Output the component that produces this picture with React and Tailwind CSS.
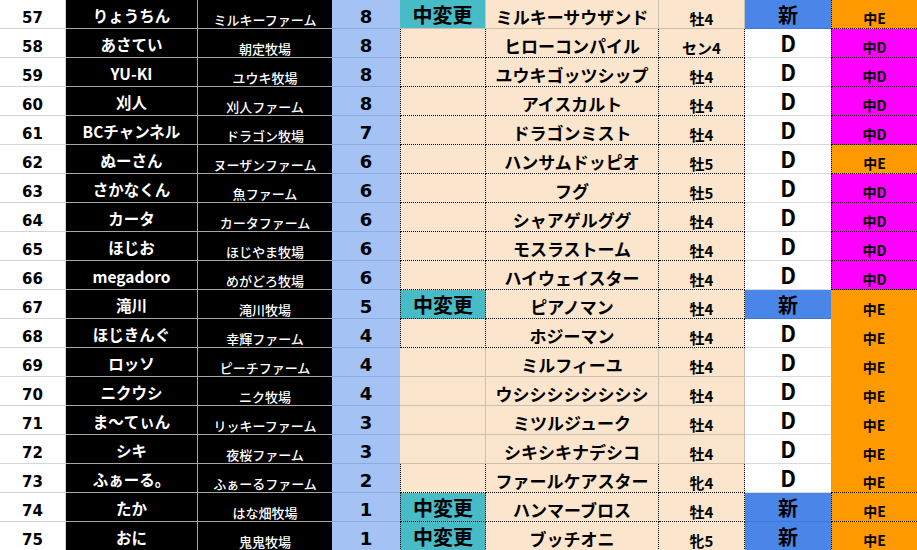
import React from "react";

// 行データ: [番号, オーナー, 牧場, 数, 中変更?, 馬名, 性齢, 新?, 区分(E/D)]
const rows = [
    [57, "りょうちん", "ミルキーファーム", 8, true, "ミルキーサウザンド", "牡4", true, "E"],
    [58, "あさてい", "朝定牧場", 8, false, "ヒローコンパイル", "セン4", false, "D"],
    [59, "YU-KI", "ユウキ牧場", 8, false, "ユウキゴッツシップ", "牡4", false, "D"],
    [60, "刈人", "刈人ファーム", 8, false, "アイスカルト", "牡4", false, "D"],
    [61, "BCチャンネル", "ドラゴン牧場", 7, false, "ドラゴンミスト", "牡4", false, "D"],
    [62, "ぬーさん", "ヌーザンファーム", 6, false, "ハンサムドッピオ", "牡5", false, "E"],
    [63, "さかなくん", "魚ファーム", 6, false, "フグ", "牡5", false, "D"],
    [64, "カータ", "カータファーム", 6, false, "シャアゲルググ", "牡4", false, "D"],
    [65, "ほじお", "ほじやま牧場", 6, false, "モスラストーム", "牡4", false, "D"],
    [66, "megadoro", "めがどろ牧場", 6, false, "ハイウェイスター", "牡4", false, "D"],
    [67, "滝川", "滝川牧場", 5, true, "ピアノマン", "牡4", true, "E"],
    [68, "ほじきんぐ", "幸輝ファーム", 4, false, "ホジーマン", "牡4", false, "E"],
    [69, "ロッソ", "ピーチファーム", 4, false, "ミルフィーユ", "牡4", false, "E"],
    [70, "ニクウシ", "ニク牧場", 4, false, "ウシシシシシシシシ", "牡4", false, "E"],
    [71, "ま～てぃん", "リッキーファーム", 3, false, "ミツルジューク", "牡4", false, "E"],
    [72, "シキ", "夜桜ファーム", 3, false, "シキシキナデシコ", "牡4", false, "E"],
    [73, "ふぁーる。", "ふぁーるファーム", 2, false, "ファールケアスター", "牝4", false, "E"],
    [74, "たか", "はな畑牧場", 1, true, "ハンマーブロス", "牡4", true, "E"],
    [75, "おに", "鬼鬼牧場", 1, true, "ブッチオニ", "牝5", true, "E"],
];

const jp = "font-['Noto_Sans_CJK_JP',sans-serif]";
const dv = "font-['DejaVu_Sans',sans-serif]";

function Row({ r }) {
    const [no, owner, farm, num, change, horse, sex, isNew, grade] = r;
    // 点線の罫線がある行
    const dot = (no >= 58 && no <= 68) || no >= 73;
    const dotRight = (no >= 57 && no <= 66) || no >= 74;
    const dotBottomOnly = no === 73;

    const midBorder = dot
        ? "[border-right:1px_dotted_#000] [border-bottom:1px_dotted_#000]"
        : "[border-right:1px_solid_#cbbfb2] [border-bottom:1px_solid_#cbbfb2]";

    return (
        <div className="grid h-[29px] grid-cols-[66px_132px_134px_68px_86px_173px_86px_86px_86px]">
            <div className={`flex items-center justify-center bg-white pt-[8px] text-[15px] leading-none font-bold text-black [border-right:1px_solid_#d4d4d4] [border-bottom:1px_solid_#d4d4d4] ${dv}`}>
                {no}
            </div>
            <div className={`flex items-center justify-center bg-black pt-[4px] text-[15.5px] leading-none font-bold text-white [border-right:1px_solid_#a6a6a6] [border-bottom:1px_solid_#a6a6a6] ${jp}`}>
                {owner}
            </div>
            <div className={`flex items-center justify-center bg-black pt-[11px] text-[13px] leading-none font-medium text-white [border-bottom:1px_solid_#a6a6a6] ${jp}`}>
                {farm}
            </div>
            <div className={`flex items-center justify-center bg-[#a4c2f4] pt-[6px] text-[18px] leading-none font-bold text-black [border-bottom:1px_solid_#8eaadf] ${dv}`}>
                {num}
            </div>
            <div
                className={`flex items-center justify-center pt-[1px] text-[20px] leading-none font-bold text-black ${jp} ${change ? "bg-[#47bbc6]" : "bg-[#fce5cd]"} ${midBorder} ${
                    dot ? "[border-left:1px_dotted_#000]" : ""
                }`}
            >
                {change ? "中変更" : ""}
            </div>
            <div className={`flex items-center justify-center bg-[#fce5cd] pt-[5px] text-[17px] leading-none font-bold text-black ${jp} ${midBorder}`}>
                {horse}
            </div>
            <div className={`flex items-center justify-center bg-[#fce5cd] pt-[8px] text-[15px] leading-none font-bold text-black ${jp} ${midBorder}`}>
                {sex}
            </div>
            {isNew ? (
                <div className={`flex items-center justify-center bg-[#4a86e8] pt-[1px] text-[20px] leading-none font-bold text-black [border-bottom:1px_solid_#3f78d6] ${jp}`}>
                    新
                </div>
            ) : (
                <div className={`flex items-center justify-center bg-white pb-[2px] text-[22px] leading-none font-bold text-black [border-bottom:1px_solid_#d9d9d9] ${jp}`}>
                    D
                </div>
            )}
            <div
                className={`flex items-center justify-center pt-[8px] text-[14px] leading-none font-bold text-black ${jp} ${grade === "E" ? "bg-[#ff9900]" : "bg-[#ff00ff]"} ${
                    dotRight ? "[border-left:1px_dotted_#000] [border-bottom:1px_dotted_#000]" : ""
                } ${dotBottomOnly ? "[border-bottom:1px_dotted_#000]" : ""}`}
            >
                {grade === "E" ? "中E" : "中D"}
            </div>
        </div>
    );
}

export default function App() {
    return (
        <div className="h-[550px] w-[917px] overflow-hidden bg-white">
            {rows.map((r) => (
                <Row key={r[0]} r={r} />
            ))}
        </div>
    );
}
